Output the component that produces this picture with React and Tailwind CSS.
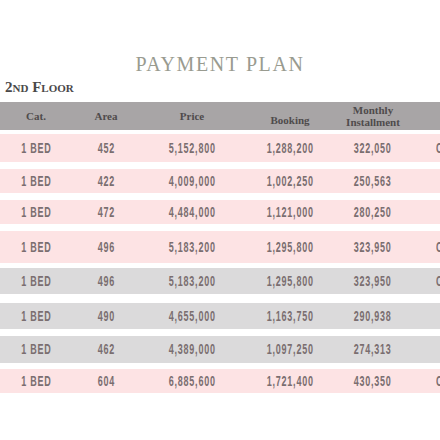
import React from "react";

const rows = [
  { area: "452", price: "5,152,800", booking: "1,288,200", monthly: "322,050", tag: "CORNER", tone: "pink", h: "h-[28px]", mt: "mt-[4px]" },
  { area: "422", price: "4,009,000", booking: "1,002,250", monthly: "250,563", tag: "", tone: "pink", h: "h-[24px]", mt: "mt-[7px]" },
  { area: "472", price: "4,484,000", booking: "1,121,000", monthly: "280,250", tag: "", tone: "pink", h: "h-[24px]", mt: "mt-[7px]" },
  { area: "496", price: "5,183,200", booking: "1,295,800", monthly: "323,950", tag: "CORNER", tone: "pink", h: "h-[32px]", mt: "mt-[7px]" },
  { area: "496", price: "5,183,200", booking: "1,295,800", monthly: "323,950", tag: "CORNER", tone: "gray", h: "h-[26px]", mt: "mt-[5px]" },
  { area: "490", price: "4,655,000", booking: "1,163,750", monthly: "290,938", tag: "", tone: "gray", h: "h-[26px]", mt: "mt-[9px]" },
  { area: "462", price: "4,389,000", booking: "1,097,250", monthly: "274,313", tag: "", tone: "gray", h: "h-[27px]", mt: "mt-[7px]" },
  { area: "604", price: "6,885,600", booking: "1,721,400", monthly: "430,350", tag: "CORNER", tone: "pink", h: "h-[24px]", mt: "mt-[6px]" },
];

// tall condensed figures, squeezed from Liberation Sans
const num = "font-['Liberation_Sans',sans-serif] font-bold text-[15px] tracking-[1.3px] text-[#7a6e70] scale-x-[0.6] inline-block";

function Cell({ w, children }) {
  return (
    <div className={`${w} shrink-0 flex justify-center items-center`}>
      <span className={num}>{children}</span>
    </div>
  );
}

export default function App() {
  return (
    <div className="w-[440px] h-[440px] bg-white overflow-hidden font-['Liberation_Serif',serif]">
      <h1 className="pt-[54px] text-center text-[20px] leading-[20px] tracking-[1.6px] text-[#999b90]">
        PAYMENT PLAN
      </h1>

      <h2 className="mt-[5px] pl-[5px] text-[15px] leading-[16px] font-bold text-[#4a4849] [font-variant:small-caps]">
        2nd Floor
      </h2>

      <div className="mt-[7px] h-[28px] flex bg-[#a8a5a6] text-[11px] font-bold text-[#4f4b4c] leading-[12px]">
        <div className="w-[72px] shrink-0 flex justify-center items-center">Cat.</div>
        <div className="w-[68px] shrink-0 flex justify-center items-center">Area</div>
        <div className="w-[104px] shrink-0 flex justify-center items-center">Price</div>
        <div className="w-[92px] shrink-0 flex justify-center items-end pb-[4px]">Booking</div>
        <div className="w-[74px] shrink-0 flex flex-col justify-center items-center">
          <span>Monthly</span>
          <span>Installment</span>
        </div>
      </div>

      {rows.map((r, i) => (
        <div
          key={i}
          className={`${r.h} ${r.mt} flex ${r.tone === "pink" ? "bg-[#fde3e4]" : "bg-[#dbdadb]"}`}
        >
          <Cell w="w-[72px]">1 BED</Cell>
          <Cell w="w-[68px]">{r.area}</Cell>
          <Cell w="w-[104px]">{r.price}</Cell>
          <Cell w="w-[92px]">{r.booking}</Cell>
          <Cell w="w-[74px]">{r.monthly}</Cell>
          <div className="shrink-0 flex items-center pl-[26px] whitespace-nowrap">
            <span className={`${num} origin-left`}>{r.tag}</span>
          </div>
        </div>
      ))}
    </div>
  );
}
